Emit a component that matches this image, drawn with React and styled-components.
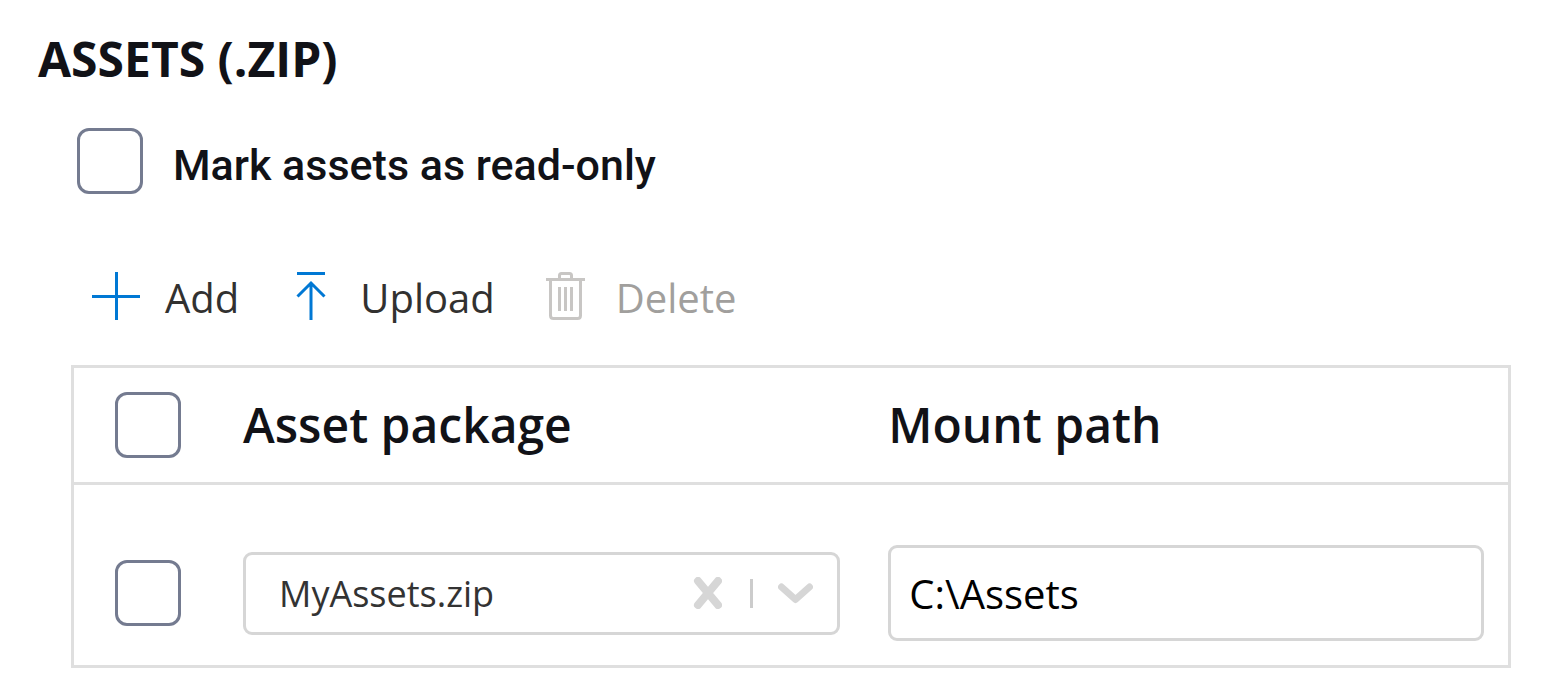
import React from "react";
import styled, { createGlobalStyle } from "styled-components";

const GlobalStyle = createGlobalStyle`
  *, *::before, *::after { box-sizing: border-box; }
  body {
    margin: 0;
    background: #fff;
    color: #111217;
    font-family: "Open Sans", "Noto Sans", sans-serif;
  }
`;

const Page = styled.main`
  padding: 27px 42px 32px 38px;
`;

const Heading = styled.h2`
  margin: 0;
  font-size: 48px;
  line-height: 64px;
  font-weight: 700;
`;

const Section = styled.section`
  padding-left: 33px;
`;

const CheckRow = styled.div`
  display: flex;
  align-items: center;
  gap: 30px;
  margin-top: 37px;
  padding-left: 6px;
`;

const Checkbox = styled.input.attrs({ type: "checkbox" })`
  appearance: none;
  display: block;
  flex: none;
  width: 66px;
  height: 66px;
  margin: 0;
  border: 3px solid #747b90;
  border-radius: 12px;
  background: #fff;
  &:checked {
    background: #747b90;
  }
`;

const CheckLabel = styled.label`
  padding-top: 8px;
  font-family: Roboto, sans-serif;
  font-size: 43px;
  line-height: 50px;
  font-weight: 500;
`;

const Toolbar = styled.div`
  display: flex;
  gap: 48px;
  margin: 72px 0 39px;
  padding-left: 21px;
`;

const ToolButton = styled.button`
  display: flex;
  align-items: center;
  gap: 25px;
  padding: 0;
  border: 0;
  background: none;
  color: #323130;
  font-family: "Open Sans", "Noto Sans", sans-serif;
  font-size: 40px;
  line-height: 56px;
  svg {
    flex: none;
    color: #0078d4;
  }
  &:disabled {
    color: #a19f9d;
  }
  &:disabled svg {
    color: #c8c6c4;
  }
`;

const ToolText = styled.span`
  padding-top: 4px;
`;

const TableFrame = styled.div`
  border: 3px solid #dfdfdf;
`;

const Table = styled.table`
  width: 100%;
  table-layout: fixed;
  border-collapse: separate;
  border-spacing: 0;
`;

const HeadCell = styled.th`
  width: ${(p) => p.$width || "auto"};
  padding: 24px 0 24px ${(p) => p.$indent || "0"};
  border-bottom: 3px solid #dfdfdf;
  font-size: 48px;
  line-height: 66px;
  font-weight: 600;
  text-align: left;
`;

const Cell = styled.td`
  padding: 60px ${(p) => p.$end || "0"} 24px ${(p) => p.$indent || "0"};
  vertical-align: middle;
`;

const SelectBox = styled.div`
  position: relative;
`;

const Select = styled.select`
  appearance: none;
  display: block;
  width: 100%;
  height: 83px;
  padding: 0 160px 0 33px;
  border: 3px solid #d6d6d6;
  border-radius: 9px;
  background: #fff;
  color: #333;
  font-family: "Open Sans", "Noto Sans", sans-serif;
  font-size: 36px;
`;

const Indicators = styled.div`
  position: absolute;
  top: 0;
  right: 27px;
  bottom: 0;
  display: flex;
  align-items: center;
  color: #d6d6d6;
  pointer-events: none;
`;

const ClearButton = styled.button`
  display: block;
  padding: 0;
  border: 0;
  background: none;
  color: inherit;
  pointer-events: auto;
  svg {
    display: block;
  }
`;

const Divider = styled.span`
  width: 3px;
  height: 29px;
  margin: 0 25px 0 28px;
  background: #ccc;
`;

const TextInput = styled.input`
  display: block;
  width: 100%;
  height: 96px;
  padding: 0 18px;
  border: 3px solid #d6d6d6;
  border-radius: 9px;
  background: #fff;
  color: #000;
  font-family: "Open Sans", "Noto Sans", sans-serif;
  font-size: 40px;
`;

const ToolIcon = ({ children }) => (
  <svg width="48" height="48" viewBox="0 0 48 48" fill="none" stroke="currentColor" strokeWidth="3" aria-hidden="true">
    {children}
  </svg>
);

export default function App() {
  return (
    <Page>
      <GlobalStyle />
      <Heading>ASSETS (.ZIP)</Heading>
      <Section>
        <CheckRow>
          <Checkbox id="read-only" />
          <CheckLabel htmlFor="read-only">Mark assets as read-only</CheckLabel>
        </CheckRow>
        <Toolbar>
          <ToolButton type="button">
            <ToolIcon>
              <path d="M24.5 0V48M0 24.5H48" />
            </ToolIcon>
            <ToolText>Add</ToolText>
          </ToolButton>
          <ToolButton type="button">
            <ToolIcon>
              <path d="M10 1.5H38M24 48V11.5M10.5 24.5L24 11L37.5 24.5" />
            </ToolIcon>
            <ToolText>Upload</ToolText>
          </ToolButton>
          <ToolButton type="button" disabled>
            <ToolIcon>
              <path d="M3 7.5H42M16.5 7.5V3.5Q16.5 1.5 18.5 1.5H26.5Q28.5 1.5 28.5 3.5V7.5M7.5 7.5V43.5Q7.5 46.5 10.5 46.5H34.5Q37.5 46.5 37.5 43.5V7.5M16.5 15V39M22.5 15V39M28.5 15V39" />
            </ToolIcon>
            <ToolText>Delete</ToolText>
          </ToolButton>
        </Toolbar>
        <TableFrame>
          <Table>
            <thead>
              <tr>
                <HeadCell $width="169px" $indent="41px">
                  <Checkbox aria-label="Select all assets" />
                </HeadCell>
                <HeadCell $width="45%">Asset package</HeadCell>
                <HeadCell>Mount path</HeadCell>
              </tr>
            </thead>
            <tbody>
              <tr>
                <Cell $indent="41px">
                  <Checkbox aria-label="Select MyAssets.zip" />
                </Cell>
                <Cell $end="48px">
                  <SelectBox>
                    <Select aria-label="Asset package" defaultValue="MyAssets.zip">
                      <option>MyAssets.zip</option>
                    </Select>
                    <Indicators>
                      <ClearButton type="button" aria-label="Clear">
                        <svg width="29" height="32" viewBox="0 0 29 32" fill="none" stroke="currentColor" strokeWidth="8" strokeLinecap="round">
                          <path d="M5 4L25 28M25 4L5 28" />
                        </svg>
                      </ClearButton>
                      <Divider />
                      <svg width="35" height="21" viewBox="0 0 35 21" fill="none" stroke="currentColor" strokeWidth="7" strokeLinecap="round" strokeLinejoin="round" aria-hidden="true">
                        <path d="M3.5 4L17.5 16.5L31.5 4" />
                      </svg>
                    </Indicators>
                  </SelectBox>
                </Cell>
                <Cell $end="24px">
                  <TextInput type="text" aria-label="Mount path" defaultValue="C:\Assets" />
                </Cell>
              </tr>
            </tbody>
          </Table>
        </TableFrame>
      </Section>
    </Page>
  );
}
